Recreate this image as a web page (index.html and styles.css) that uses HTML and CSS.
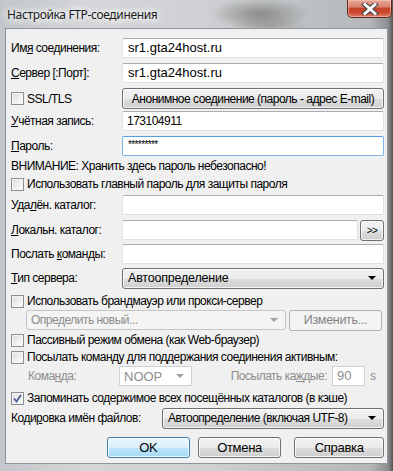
FILE: index.html
```html
<!DOCTYPE html>
<html lang="ru">
<head>
<meta charset="utf-8">
<link rel="stylesheet" href="styles.css">
</head>
<body>
<div class="window">
  <div class="titlebar">
    <span class="title">Настройка FTP-соединения</span>
    <div class="close">
      <svg width="20" height="12" viewBox="0 0 20 12">
        <path d="M5 1.5 L15 10.5 M15 1.5 L5 10.5" stroke="#3a3f4a" stroke-width="5" stroke-linecap="square"/>
        <path d="M5 1.5 L15 10.5 M15 1.5 L5 10.5" stroke="#ffffff" stroke-width="3" stroke-linecap="square"/>
      </svg>
    </div>
  </div>
  <div class="client">
    <div class="row r1"><label class="lbl">Им<u>я</u> соединения:</label><div class="edit grow">sr1.gta24host.ru</div></div>
    <div class="row r2"><label class="lbl"><u>С</u>ервер [:Порт]:</label><div class="edit grow">sr1.gta24host.ru</div></div>
    <div class="row r3"><label class="lbl cbl"><span class="cb"></span>SSL/TLS</label><div class="btn grow">Анонимное соединение (пароль - адрес E-mail)</div></div>
    <div class="row r4"><label class="lbl"><u>У</u>чётная запись:</label><div class="edit grow small-text">173104911</div></div>
    <div class="row r5"><label class="lbl"><u>П</u>ароль:</label><div class="edit grow focus"><span class="pwd">*********</span></div></div>
    <div class="text warn">ВНИМАНИЕ: Хранить здесь пароль небезопасно!</div>
    <div class="check c1"><span class="cb"></span>Использовать главный пароль для защиты пароля</div>
    <div class="row r6"><label class="lbl">Уда<u>л</u>ён. каталог:</label><div class="edit grow"></div></div>
    <div class="row r7"><label class="lbl"><u>Л</u>окальн. каталог:</label><div class="edit grow"></div><div class="btn small">&gt;&gt;</div></div>
    <div class="row r8"><label class="lbl">Послать <u>к</u>оманды:</label><div class="edit grow"></div></div>
    <div class="row r9"><label class="lbl"><u>Т</u>ип сервера:</label><div class="btn combo grow"><span>Автоопределение</span><span class="arrow"></span></div></div>
    <div class="check c2"><span class="cb"></span>Использовать брандмауэр или прокси-сервер</div>
    <div class="row r10"><div class="dcombo fw"><span>Определить новый...</span><span class="arrow dis"></span></div><div class="btn disabled chg">Изменить...</div></div>
    <div class="check c3"><span class="cb"></span>Пассивный режим обмена (как Web-браузер)</div>
    <div class="check c4"><span class="cb"></span>Посылать команду для поддержания соединения активным:</div>
    <div class="row r11">
      <span class="dlbl cmd">Кома<u>н</u>да:</span>
      <div class="dcombo noop"><span>NOOP</span><span class="arrow dis"></span></div>
      <span class="dlbl every">Посылать ка<u>ж</u>дые:</span>
      <div class="dedit">90</div>
      <span class="dlbl sec">s</span>
    </div>
    <div class="check c5"><span class="cb checked"><svg width="9" height="9" viewBox="0 0 9 9"><path d="M1 4.5 L3.5 7.5 L8 1" fill="none" stroke="#4a5f97" stroke-width="1.8"/></svg></span>Запоминать содержимое всех посещённых каталогов (в кэше)</div>
    <div class="row r12"><label class="lbl enc">Коди<u>р</u>овка имён файлов:</label><div class="btn combo enc-combo grow"><span>Автоопределение (включая UTF-8)</span><span class="arrow"></span></div></div>
    <div class="buttons">
      <div class="btn dbtn default">OK</div>
      <div class="btn dbtn cancel">Отмена</div>
      <div class="btn dbtn help">Справка</div>
    </div>
  </div>
</div>
</body>
</html>
```

FILE: styles.css
```css
html, body {
  margin: 0;
  padding: 0;
}
body {
  width: 393px;
  height: 471px;
  overflow: hidden;
  font-family: "Liberation Sans", Arial, sans-serif;
  font-size: 12px;
  letter-spacing: -0.5px;
  color: #000;
}
.window {
  width: 393px;
  height: 471px;
  box-sizing: border-box;
  padding: 0 5px 0 5px;
  display: flex;
  flex-direction: column;
  background:
    radial-gradient(ellipse 50px 16px at 260px 14px, rgba(90,90,80,0.55), rgba(90,90,80,0) 100%),
    radial-gradient(ellipse 40px 10px at 270px 26px, rgba(120,120,110,0.35), rgba(120,120,110,0) 100%),
    linear-gradient(to right, #c3c6ca 0px, #d3d5d8 80px, #cfd1d4 200px, #bfc2c5 300px, #b5b8bb 370px, #8c8f92 388px, #555 393px);
}
.titlebar {
  height: 28px;
  flex: none;
  display: flex;
  align-items: flex-start;
  justify-content: space-between;
}
.title {
  font-family: "Noto Sans", "Open Sans", sans-serif;
  font-size: 12px;
  letter-spacing: -0.35px;
  margin: 6px 0 0 2px;
  color: #1a1a1a;
  text-shadow: 0 0 6px #fff, 0 0 8px #fff, 0 0 10px #fff;
}
.close {
  width: 45px;
  height: 18px;
  margin-right: -4px;
  box-sizing: border-box;
  border: 1px solid #5e2a22;
  border-top: none;
  border-radius: 0 0 5px 5px;
  background: linear-gradient(to bottom, #e8a493 0%, #d9826f 40%, #c7432b 50%, #cc4a31 75%, #e0826c 100%);
  box-shadow: inset 0 0 0 1px rgba(255,220,210,0.45);
  display: flex;
  align-items: center;
  justify-content: center;
}
.client {
  flex: 1;
  margin-bottom: 7px;
  background: #f0f0f0;
  border: 1px solid #8e9499;
  padding: 0 3px 0 5px;
  display: flex;
  flex-direction: column;
}
.row {
  display: flex;
  align-items: center;
  height: 20px;
  flex: none;
}
.lbl {
  width: 111px;
  flex: none;
  white-space: nowrap;
}
.cbl {
  display: flex;
  align-items: center;
  gap: 3px;
}
.grow {
  flex: 1;
}
.edit {
  height: 20px;
  box-sizing: border-box;
  background: #fff;
  border: 1px solid #dbdfe6;
  border-top-color: #abadb3;
  border-left-color: #e2e3ea;
  border-radius: 2px;
  padding: 0 0 0 5px;
  line-height: 18px;
  font-size: 13px;
  letter-spacing: 0;
  white-space: nowrap;
  overflow: hidden;
}
.edit.small-text {
  font-size: 12px;
  letter-spacing: -0.5px;
  padding-left: 4px;
}
.edit.focus {
  border-color: #7eb4ea;
  border-top-color: #569de5;
}
.pwd {
  font-size: 10px;
  letter-spacing: -0.6px;
  position: relative;
  top: -2px;
}
.btn {
  height: 21px;
  box-sizing: border-box;
  border: 1px solid #707070;
  border-radius: 3px;
  background: linear-gradient(to bottom, #f2f2f2 0%, #ebebeb 50%, #dddddd 51%, #cfcfcf 100%);
  box-shadow: inset 0 0 0 1px rgba(255,255,255,0.75);
  display: flex;
  align-items: center;
  justify-content: center;
  white-space: nowrap;
}
.btn.small {
  width: 24px;
  margin-left: 2px;
  font-size: 10px;
}
.btn.combo {
  justify-content: space-between;
  padding: 0 7px 0 5px;
  font-size: 12.5px;
  letter-spacing: -0.2px;
}
.btn.combo.enc-combo {
  font-size: 12px;
  letter-spacing: -0.5px;
}
.arrow {
  width: 0;
  height: 0;
  border-left: 4px solid transparent;
  border-right: 4px solid transparent;
  border-top: 4px solid #000;
}
.arrow.dis {
  border-top-color: #a0a0a0;
}
.btn.disabled {
  background: #f4f4f4;
  border-color: #adb2b5;
  box-shadow: none;
  color: #838383;
  font-size: 12.5px;
  letter-spacing: -0.3px;
}
.text {
  height: 16px;
  line-height: 16px;
  flex: none;
  white-space: nowrap;
}
.check {
  height: 16px;
  flex: none;
  display: flex;
  align-items: center;
  gap: 3px;
  white-space: nowrap;
}
.cb {
  width: 13px;
  height: 13px;
  box-sizing: border-box;
  border: 1px solid #8e8f8f;
  background: linear-gradient(135deg, #dcdcdc 0%, #f4f4f4 70%, #ffffff 100%);
  box-shadow: inset 0 0 0 1px #f4f4f4;
  flex: none;
  display: inline-flex;
  align-items: center;
  justify-content: center;
}
.dcombo {
  height: 20px;
  box-sizing: border-box;
  border: 1px solid #c5c5c5;
  border-radius: 3px;
  background: #f4f4f4;
  color: #8d8d8d;
  display: flex;
  align-items: center;
  justify-content: space-between;
  padding: 0 7px 0 4px;
  white-space: nowrap;
}
.dcombo.fw {
  margin-left: 15px;
  width: 260px;
}
.btn.chg {
  margin-left: 3px;
  width: 93px;
}
.dlbl {
  color: #8d8d8d;
  white-space: nowrap;
}
.dlbl.cmd {
  margin-left: 17px;
  width: 91px;
}
.dcombo.noop {
  width: 73px;
  border-color: #d0d0d0;
  border-radius: 1px;
  background: #fff;
  font-size: 13px;
  letter-spacing: 0;
}
.dlbl.every {
  flex: 1;
  text-align: right;
}
.dedit {
  margin-left: 5px;
  width: 33px;
  height: 20px;
  box-sizing: border-box;
  border: 1px solid #d0d0d0;
  background: #fff;
  color: #8d8d8d;
  padding-left: 4px;
  line-height: 18px;
  font-size: 13px;
  letter-spacing: 0;
}
.dlbl.sec {
  width: 14px;
  padding-left: 5px;
}
.lbl.enc {
  width: 151px;
}
.r1 { margin-top: 9px; }
.r2 { margin-top: 5px; }
.r3 { margin-top: 5px; height: 21px; }
.r4 { margin-top: 2px; }
.r5 { margin-top: 5px; }
.warn { margin-top: 2px; }
.c1 { margin-top: 2px; }
.r6 { margin-top: 3px; }
.r7 { margin-top: 5px; }
.r8 { margin-top: 4px; }
.r9 { margin-top: 4px; }
.c2 { margin-top: 5px; }
.r10 { margin-top: 1px; }
.c3 { margin-top: 2px; }
.c4 { margin-top: 1px; }
.r11 { margin-top: 1px; }
.c5 { margin-top: 4px; }
.r12 { margin-top: 2px; }
.buttons {
  margin-top: 9px;
  display: flex;
  flex: none;
}
.dbtn {
  width: 85px;
  font-size: 13px;
  letter-spacing: -0.3px;
}
.dbtn.default {
  margin-left: 96px;
  border-color: #3c7fb1;
  background: linear-gradient(to bottom, #eaf6fd 0%, #d9f0fc 50%, #bee6fd 51%, #a7d9f5 100%);
  box-shadow: inset 0 0 0 1px rgba(255,255,255,0.8);
  width: 84px;
}
.dbtn.cancel {
  margin-left: 8px;
}
.dbtn.help {
  margin-left: 13px;
  width: 91px;
}
```
